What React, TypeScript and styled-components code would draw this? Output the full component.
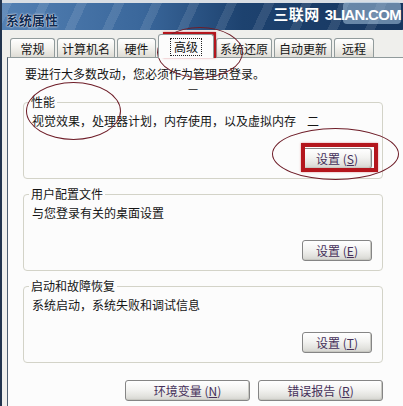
import React from 'react'
import styled, { createGlobalStyle } from 'styled-components'

const GlobalStyle = createGlobalStyle`
  html, body { margin: 0; padding: 0; background: #efefec; }
  body { font-family: "Noto Sans CJK SC", "Noto Sans", sans-serif; color: #151515; }
  * { box-sizing: border-box; }
`

type TabItem = { label: string; width: number; active?: boolean }

const tabs: TabItem[] = [
  { label: '常规', width: 45 },
  { label: '计算机名', width: 58 },
  { label: '硬件', width: 39 },
  { label: '高级', width: 56, active: true },
  { label: '系统还原', width: 56 },
  { label: '自动更新', width: 58 },
  { label: '远程', width: 40 },
]

type Group = { title: string; text: string; key: string; extra?: string }

const groups: Group[] = [
  { title: '性能', text: '视觉效果，处理器计划，内存使用，以及虚拟内存', key: 'S', extra: '二' },
  { title: '用户配置文件', text: '与您登录有关的桌面设置', key: 'E' },
  { title: '启动和故障恢复', text: '系统启动，系统失败和调试信息', key: 'T' },
]

const App: React.FC = () => {
  return (
    <Window>
      <GlobalStyle />
      <TitleBar>
        <Title>系统属性</Title>
        <Watermark>
          <span className='cn'>三联网</span>
          <span className='en'>3LIAN.COM</span>
        </Watermark>
        <WatermarkBox />
      </TitleBar>
      <Body>
        <TabStrip>
          {tabs.map(t => (
            <Tab key={t.label} $width={t.width} $active={t.active}>
              {t.active ? <Focus>{t.label}</Focus> : t.label}
            </Tab>
          ))}
        </TabStrip>
        <Panel>
          <Content>
            <Intro>要进行大多数改动，您必须作为管理员登录。</Intro>
            {groups.map(g => (
              <GroupBox key={g.key}>
                <legend>{g.title}</legend>
                <Desc>
                  {g.text}
                  {g.extra && <Mark>{g.extra}</Mark>}
                </Desc>
                <ButtonRow>
                  <Button $width={70}>设置 (<u>{g.key}</u>)</Button>
                </ButtonRow>
              </GroupBox>
            ))}
            <BottomRow>
              <Button $width={125}>环境变量 (<u>N</u>)</Button>
              <Button $width={125}>错误报告 (<u>R</u>)</Button>
            </BottomRow>
          </Content>
        </Panel>
      </Body>

      {/* hand drawn marks over the screenshot */}
      <RedBox $x={161} $y={32} $w={53} $h={26} />
      <Ellipse $x={155} $y={27} $w={86} $h={51} />
      <Ellipse $x={24} $y={82} $w={95} $h={58} />
      <RedBox $x={299} $y={143} $w={77} $h={29} $b={4} />
      <Ellipse $x={270} $y={128} $w={127} $h={52} />
      <Note style={{ left: 186, top: 85 }}>一</Note>
    </Window>
  )
}

const Window = styled.div`
  position: relative;
  width: 403px;
  height: 406px;
  overflow: hidden;
  background: #efefec;
  border-left: 2px solid #22344e;
`

const TitleBar = styled.div`
  position: relative;
  display: flex;
  align-items: center;
  height: 30px;
  padding-left: 4px;
  border-top: 3px solid #d9dee4;
  background:
    repeating-linear-gradient(115deg, rgba(255,255,255,0.10) 0 9px, rgba(255,255,255,0) 9px 34px),
    linear-gradient(90deg, #5380b3 0%, #3a679b 35%, #1d426f 60%, #17365f 100%);
`

const Title = styled.div`
  font-size: 13px;
  font-weight: 700;
  line-height: 16px;
  margin-top: 6px;
  color: #0f2b52;
  text-shadow: 0 0 2px rgba(255,255,255,0.9), 0 0 1px #fff;
`

const Watermark = styled.div`
  position: relative;
  z-index: 1;
  display: flex;
  align-items: baseline;
  gap: 5px;
  margin-left: auto;
  margin-right: 2px;
  align-self: flex-start;
  margin-top: 0;
  color: #fff;
  font-weight: 700;

  .cn { font-size: 15px; letter-spacing: 0.5px; }
  .en {
    font-family: "Liberation Sans", Arial, sans-serif;
    font-size: 15px;
    letter-spacing: -0.7px;
  }
`

const WatermarkBox = styled.div`
  position: absolute;
  right: 2px;
  top: -1px;
  width: 58px;
  height: 22px;
  border-radius: 4px;
  background: rgba(170, 198, 224, 0.55);
`

const Body = styled.div`
  padding: 4px 0 0 5px;
`

const TabStrip = styled.div`
  display: flex;
  align-items: flex-end;
  gap: 2px;
  height: 23px;
  padding-left: 3px;
`

const Tab = styled.div<{ $width: number; $active?: boolean }>`
  position: relative;
  z-index: ${p => (p.$active ? 2 : 0)};
  display: flex;
  align-items: center;
  justify-content: center;
  width: ${p => p.$width}px;
  height: ${p => (p.$active ? 24 : 19)}px;
  margin-bottom: ${p => (p.$active ? -1 : 0)}px;
  border: 1px solid #919b9c;
  border-bottom: none;
  border-radius: 3px 3px 0 0;
  font-size: 12px;
  line-height: 14px;
  padding-top: 1px;
  background: ${p => (p.$active
    ? '#fcfcfc'
    : 'linear-gradient(#ffffff 0%, #f4f3ef 45%, #dedcd5 100%)')};
`

const Focus = styled.span`
  outline: 1px dotted #222;
  outline-offset: 1px;
  padding: 0 2px;
`

const Panel = styled.div`
  margin-right: -10px;
  border: 1px solid #919b9c;
  border-left-color: #4f5f72;
  background: #fcfcfc;
  padding: 8px 0 30px 15px;
`

const Content = styled.div`
  width: 360px;
`

const Intro = styled.div`
  padding-left: 2px;
  font-size: 12px;
  line-height: 16px;
`

const GroupBox = styled.fieldset`
  margin: 8px 0 0;
  width: 360px;
  min-inline-size: 0;
  padding: 4px 10px 9px 8px;
  border: 1px solid #d3d3c8;
  border-radius: 4px;

  &:first-of-type { margin-top: 13px; }

  legend {
    margin-left: -3px;
    padding: 0 2px;
    font-size: 12px;
    line-height: 14px;
  }
`

const Desc = styled.div`
  font-size: 12px;
  line-height: 16px;
  white-space: nowrap;
`

const Mark = styled.span`
  margin-left: 11px;
`

const ButtonRow = styled.div`
  display: flex;
  justify-content: flex-end;
  margin-top: 19px;
`

const BottomRow = styled.div`
  display: flex;
  justify-content: flex-end;
  gap: 8px;
  margin-top: 17px;
`

const Button = styled.button<{ $width: number }>`
  width: ${p => p.$width}px;
  height: 21px;
  padding: 0;
  border: 1px solid #858585;
  border-radius: 3px;
  background: linear-gradient(#ffffff 0%, #f3f3f1 45%, #e2e2de 80%, #d3d3ce 100%);
  box-shadow: inset -1px -1px 0 #c8c8c2;
  font-family: "Noto Sans CJK SC", "Noto Sans", sans-serif;
  font-size: 12px;
  line-height: 14px;
  color: #45305a;

  u { text-decoration: underline; text-underline-offset: 1px; }
`

const RedBox = styled.div<{ $x: number; $y: number; $w: number; $h: number; $b?: number }>`
  position: absolute;
  left: ${p => p.$x}px;
  top: ${p => p.$y}px;
  width: ${p => p.$w}px;
  height: ${p => p.$h}px;
  border: ${p => p.$b ?? 3}px solid #b4161d;
  box-shadow: 0 0 2px rgba(200, 40, 50, 0.5);
  pointer-events: none;
`

const Ellipse = styled.div<{ $x: number; $y: number; $w: number; $h: number }>`
  position: absolute;
  left: ${p => p.$x}px;
  top: ${p => p.$y}px;
  width: ${p => p.$w}px;
  height: ${p => p.$h}px;
  border: 1px solid #6e1d28;
  border-radius: 50%;
  pointer-events: none;
`

const Note = styled.span`
  position: absolute;
  font-size: 10px;
  line-height: 10px;
  color: #151515;
`

export default App
